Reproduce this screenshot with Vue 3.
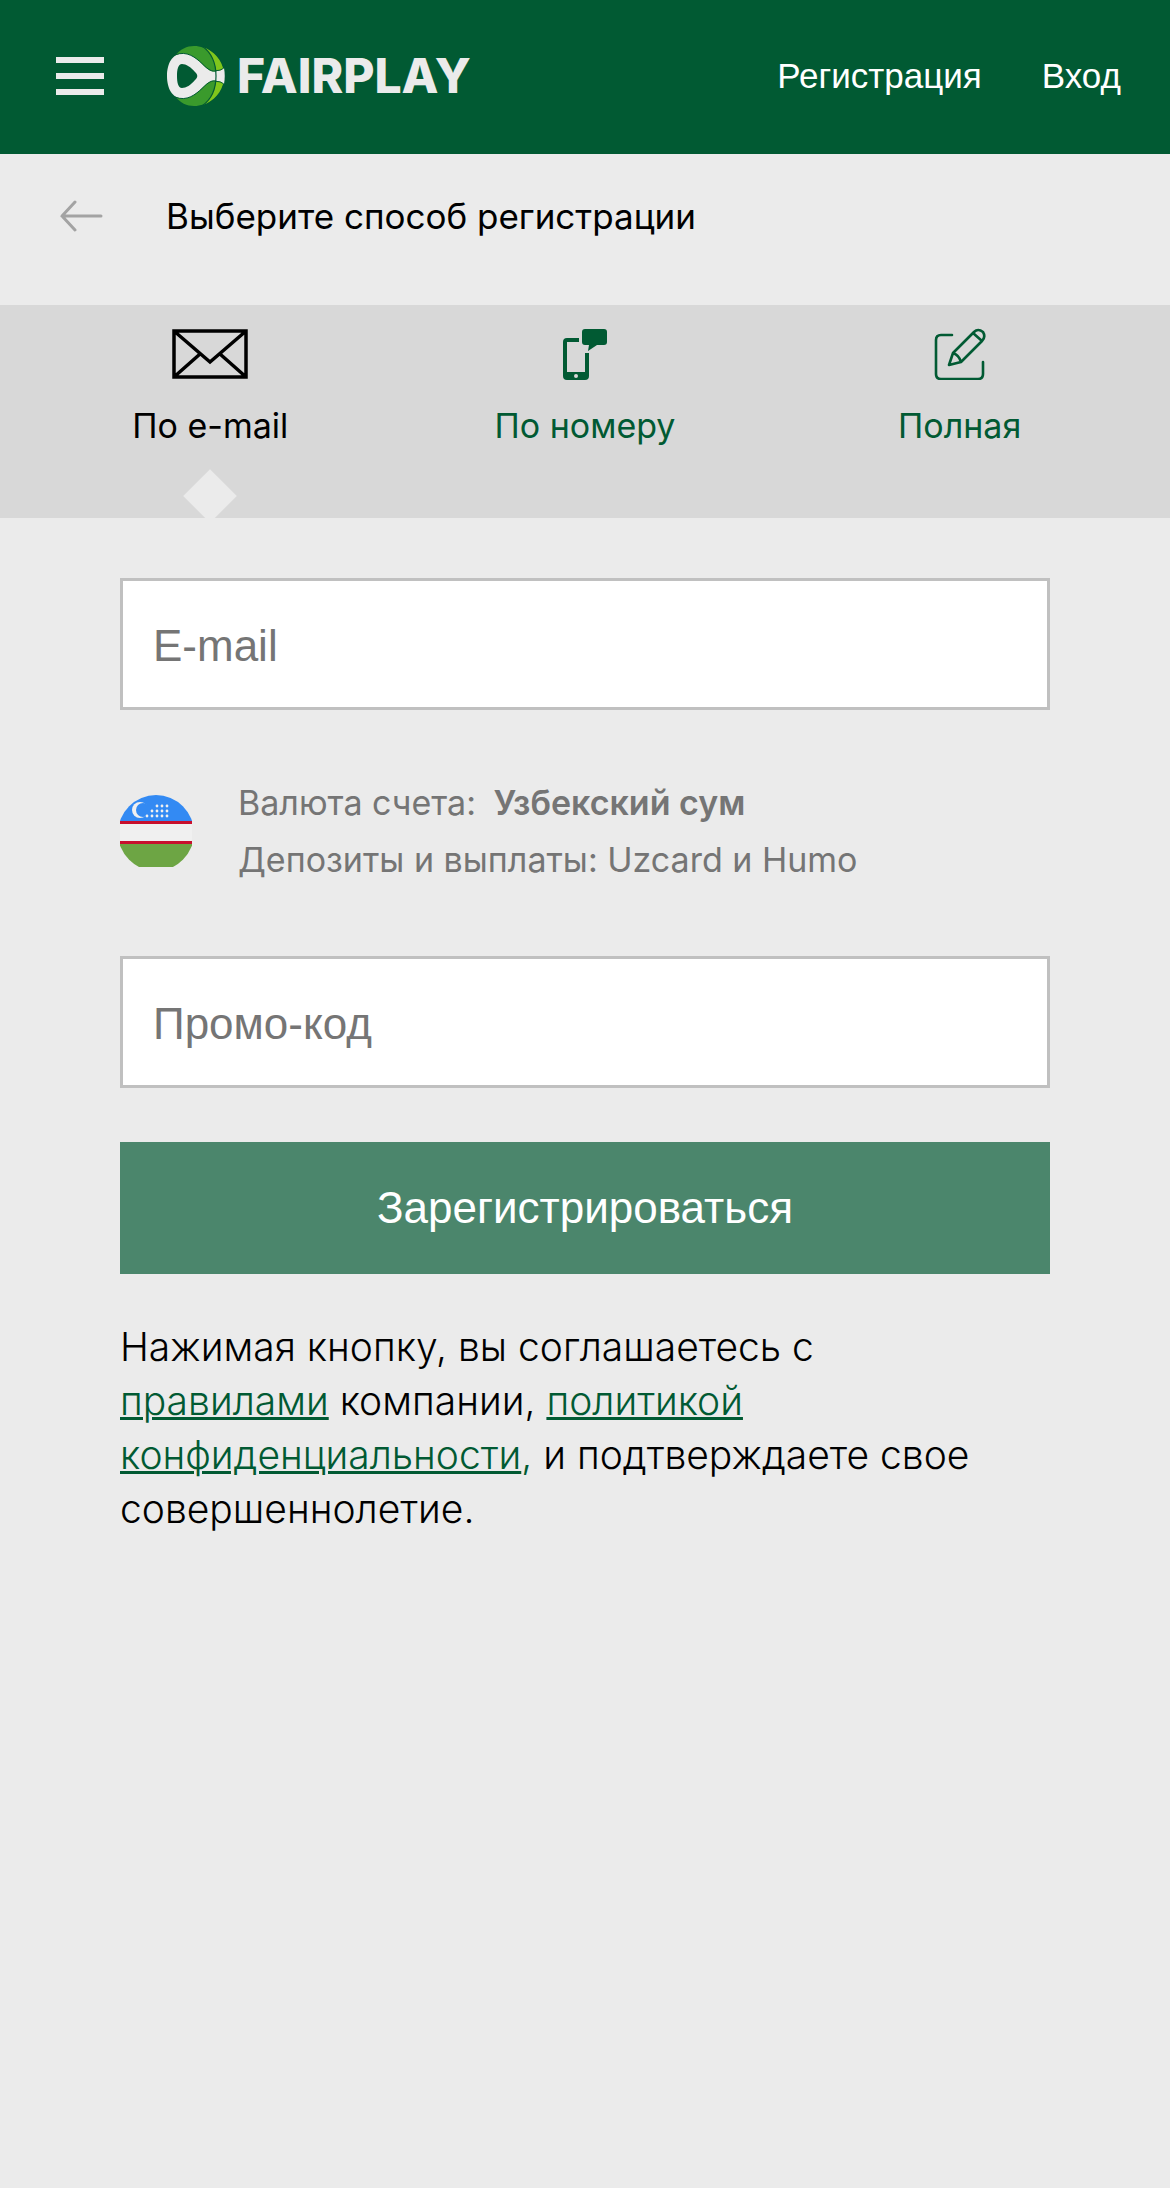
<template>
  <div class="page">
    <header class="header">
      <button type="button" class="menu-btn" aria-label="Меню">
        <span class="menu-line"></span>
        <span class="menu-line"></span>
        <span class="menu-line"></span>
      </button>
      <a href="#" class="logo">
        <svg class="logo-ball" viewBox="0 0 58 60" width="58" height="60">
          <path d="M8 10C13 3 20 0 27 0c13 0 25 9 29 23v14C52 51 40 60 27 60 20 60 13 57 8 50z" fill="#3a9a2c" />
          <path d="M36 1C47 5 55 14 57 26l-8-1C48 15 43 7 36 1z" fill="#80c61c" />
          <path d="M36 59C47 55 55 46 57 34l-8 1C48 45 43 53 36 59z" fill="#80c61c" />
          <path
            d="M16 7.500C24 7.500 30 13 35 18c6 6 10 9 15 7 3 0 5-1 7-3 1 5 1 11 0 16-2-2-4-3-7-3-5-2-9 1-15 7C30 47 24 52.500 16 52.500 5 52.500 0 42 0 30S5 7.500 16 7.500z"
            fill="#ebebeb"
          />
          <path d="M8 9C20 4 29 12 35 17.500c6 6 10 9 15 7 3 0 5-1 7-3" fill="none" stroke="#015a33" stroke-width="1" />
          <path d="M8 51C20 56 29 48 35 42.500c6-6 10-9 15-7 3 0 5 1 7 3" fill="none" stroke="#015a33" stroke-width="1" />
          <path d="M15 18C11 18 10 24 10 30s1 12 5 12c4 0 9-3 13-8 3-3 3-5 0-8C24 21 19 18 15 18z" fill="#015a33" />
          <path d="M35 0C45 7 49 17 49 30S45 53 35 60" fill="none" stroke="#015a33" stroke-width="1.200" />
        </svg>
        <span class="logo-text">FAIRPLAY</span>
      </a>
      <nav class="header-nav">
        <a href="#">Регистрация</a>
        <a href="#">Вход</a>
      </nav>
    </header>

    <div class="title-bar">
      <button type="button" class="back-btn" aria-label="Назад">
        <svg viewBox="0 0 44 32" width="44" height="32" fill="none" stroke="#a3a3a3" stroke-width="3" stroke-linecap="round">
          <path d="M41 16H2M15 2L2 16l13 14" />
        </svg>
      </button>
      <h1 class="title">Выберите способ регистрации</h1>
    </div>

    <div class="tabs">
      <button
        v-for="tab in tabs"
        :key="tab.id"
        type="button"
        class="tab"
        :class="{ active: tab.id === activeTab }"
        @click="activeTab = tab.id"
      >
        <svg v-if="tab.id === 'email'" viewBox="0 0 76 52" width="76" height="52" fill="none" stroke="currentColor" stroke-width="3.5">
          <path d="M2 3h72v46H2zM2 3l36 31L74 3M2 49l26-23M74 49L48 26" />
        </svg>
        <svg v-else-if="tab.id === 'phone'" viewBox="0 0 44 52" width="44" height="52" fill="currentColor">
          <path d="M22 1h19q3 0 3 3v10q0 3-3 3h-7l-9 6 1-6h-4q-3 0-3-3V4q0-3 3-3z" />
          <path
            fill-rule="evenodd"
            d="M4 10h12v4H4v30h18V25h4v23q0 4-4 4H4q-4 0-4-4V14q0-4 4-4zM13 46a2 2 0 1 0 0 4 2 2 0 0 0 0-4z"
          />
        </svg>
        <svg
          v-else
          viewBox="0 0 52 52"
          width="52"
          height="52"
          fill="none"
          stroke="currentColor"
          stroke-width="2.6"
          stroke-linecap="round"
          stroke-linejoin="round"
        >
          <path d="M18 7H7q-5 0-5 5v34q0 5 5 5h37q5 0 5-5V34" />
          <path d="M15 37l4-12L40 4q4-4 9 0 3 5-1 9L27 34zM19 25q6 2 8 9M39 5l9 8" />
        </svg>
        <span class="tab-label">{{ tab.label }}</span>
      </button>
    </div>

    <form class="form" @submit.prevent>
      <input v-model="email" type="email" class="field" placeholder="E-mail" aria-label="E-mail" />

      <div class="currency">
        <svg class="flag" viewBox="0 0 72 72" width="72" height="72">
          <defs>
            <clipPath id="flag-clip">
              <circle cx="36" cy="38" r="38" />
            </clipPath>
            <mask id="moon-mask">
              <rect width="72" height="72" fill="#fff" />
              <circle cx="23" cy="15" r="7" fill="#000" />
            </mask>
          </defs>
          <g clip-path="url(#flag-clip)">
            <rect width="72" height="72" fill="#f0f0f0" />
            <rect width="72" height="26" fill="#338af3" />
            <rect y="26" width="72" height="3" fill="#c8102e" />
            <rect y="46" width="72" height="3" fill="#c8102e" />
            <rect y="49" width="72" height="23" fill="#6da544" />
            <circle cx="20" cy="15" r="8" fill="#f0f0f0" mask="url(#moon-mask)" />
            <circle v-for="(star, i) in stars" :key="i" :cx="star.x" :cy="star.y" r="1.4" fill="#f0f0f0" />
          </g>
        </svg>
        <div class="currency-text">
          <p>Валюта счета: <strong>Узбекский сум</strong></p>
          <p>Депозиты и выплаты: Uzcard и Humo</p>
        </div>
      </div>

      <input v-model="promo" type="text" class="field" placeholder="Промо-код" aria-label="Промо-код" />

      <button type="submit" class="submit-btn">Зарегистрироваться</button>

      <p class="terms">
        Нажимая кнопку, вы соглашаетесь с <br />
        <a href="#">правилами</a> компании,
        <a href="#">политикой конфиденциальности</a><span class="comma">,</span> и подтверждаете свое совершеннолетие.
      </p>
    </form>
  </div>
</template>

<script setup>
import { ref } from 'vue'

const activeTab = ref('email')
const email = ref('')
const promo = ref('')

const tabs = [
  { id: 'email', label: 'По e-mail' },
  { id: 'phone', label: 'По номеру' },
  { id: 'full', label: 'Полная' }
]

// 3, 4 and 5 stars per row, aligned to the right
const stars = [3, 4, 5].flatMap((count, row) =>
  Array.from({ length: count }, (_, i) => ({ x: 47 - i * 5, y: 11 + row * 5 }))
)
</script>

<style>
body {
  margin: 0;
  background: #ebebeb;
}
</style>

<style scoped>
.page {
  min-height: 100vh;
  background: #ebebeb;
  color: #000;
  font-family: Inter, sans-serif;
}

button {
  padding: 0;
  border: none;
  background: none;
  cursor: pointer;
}

svg {
  display: block;
  flex-shrink: 0;
}

.header {
  display: flex;
  align-items: center;
  box-sizing: border-box;
  height: 154px;
  padding: 0 49px 2px 56px;
  background: #015a33;
}

.menu-btn {
  display: flex;
  flex-direction: column;
  gap: 10px;
  width: 48px;
  margin-right: 63px;
}

.menu-line {
  height: 6px;
  background: #ebebeb;
}

.logo {
  display: flex;
  align-items: center;
  gap: 12px;
  color: #ebebeb;
  text-decoration: none;
}

.logo-text {
  font-size: 48px;
  font-weight: 800;
  line-height: 60px;
}

.header-nav {
  display: flex;
  gap: 60px;
  margin-left: auto;
}

.header-nav a {
  color: #fff;
  font-family: "Liberation Sans", sans-serif;
  font-size: 35px;
  line-height: 40px;
  text-decoration: none;
}

.title-bar {
  display: flex;
  align-items: center;
  gap: 62px;
  height: 124px;
  padding: 0 60px 27px;
}

.title {
  margin: 0;
  font-size: 35px;
  font-weight: 400;
  line-height: 48px;
}

.tabs {
  display: grid;
  grid-template-columns: repeat(3, 1fr);
  height: 213px;
  padding: 0 23px;
  overflow: hidden;
  background: #d8d8d8;
}

.tab {
  position: relative;
  display: flex;
  flex-direction: column;
  align-items: center;
  gap: 22px;
  padding-top: 23px;
  color: #015a33;
  font-family: inherit;
}

.tab.active {
  color: #000;
}

.tab.active::after {
  content: '';
  position: absolute;
  top: 172px;
  left: 50%;
  width: 38px;
  height: 38px;
  margin-left: -19px;
  background: #ebebeb;
  transform: rotate(45deg);
}

.tab-label {
  font-size: 34px;
  line-height: 48px;
}

.form {
  display: flex;
  flex-direction: column;
  padding: 60px 120px;
}

.field {
  box-sizing: border-box;
  width: 100%;
  height: 132px;
  padding: 3px 30px 0;
  border: 3px solid #c0c0c0;
  border-radius: 0;
  background: #fff;
  color: #000;
  font-family: "Liberation Sans", sans-serif;
  font-size: 44px;
  outline: none;
}

.field::placeholder {
  color: #757575;
  opacity: 1;
}

.currency {
  display: flex;
  align-items: center;
  gap: 46px;
  margin: 64px 0 68px;
}

.currency-text {
  color: #757575;
  font-size: 34px;
  line-height: 57px;
}

.currency-text p {
  margin: 0;
}

.currency-text strong {
  margin-left: 8px;
  font-weight: 600;
}

.submit-btn {
  height: 132px;
  margin-top: 54px;
  background: #4b866c;
  color: #fff;
  font-family: "Liberation Sans", sans-serif;
  font-size: 44px;
}

.terms {
  margin: 46px 0 0;
  font-size: 39px;
  font-weight: 300;
  line-height: 54px;
}

.terms a,
.terms .comma {
  color: #015a33;
}

.terms a {
  text-decoration-thickness: 3px;
}
</style>
